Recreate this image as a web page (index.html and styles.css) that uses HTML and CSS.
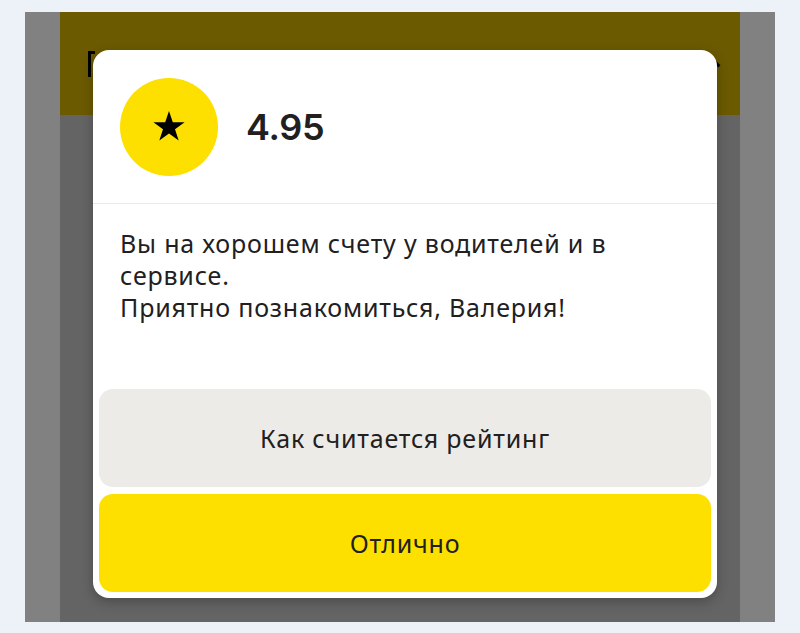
FILE: index.html
```html
<!DOCTYPE html>
<html lang="ru">
<head>
  <meta charset="UTF-8">
  <title>Рейтинг</title>
  <link rel="stylesheet" href="styles.css">
</head>
<body>
  <div class="device">
    <div class="side"></div>
    <div class="screen">
      <header class="topbar">
        <span class="menu-icon"></span>
        <span class="close-icon"></span>
      </header>

      <div class="modal">
        <div class="modal-head">
          <div class="avatar">
            <svg width="32" height="30" viewBox="0 0 32 30">
              <path d="M16 0 L19.8 11.2 L31.6 11.2 L22 18.2 L25.7 29.6 L16 22.6 L6.3 29.6 L10 18.2 L0.4 11.2 L12.2 11.2 Z" fill="#000"/>
            </svg>
          </div>
          <div class="rating">4.95</div>
        </div>

        <p class="modal-text">
          Вы на хорошем счету у водителей и в сервисе.<br>
          Приятно познакомиться, Валерия!
        </p>

        <div class="modal-actions">
          <button class="btn btn-grey">Как считается рейтинг</button>
          <button class="btn btn-yellow">Отлично</button>
        </div>
      </div>
    </div>
    <div class="side"></div>
  </div>
</body>
</html>
```

FILE: styles.css
```css
body {
  margin: 0;
  background-color: #edf1f8;
  font-family: "Noto Sans", "Open Sans", sans-serif;
  color: #21201f;
}

.device {
  display: grid;
  grid-template-columns: 35px 1fr 35px;
  height: 610px;
  margin: 12px 25px 11px;
}

.side {
  background-color: #818181;
}

.screen {
  position: relative;
  background-color: #646464;
}

.topbar {
  position: relative;
  height: 103px;
  background-color: #6b5a00;
}

.menu-icon {
  position: absolute;
  left: 28px;
  top: 39px;
  width: 7px;
  height: 26px;
  border-left: 3px solid #000;
  border-top: 3px solid #000;
  box-sizing: border-box;
}

.close-icon {
  position: absolute;
  left: 650px;
  top: 49px;
  width: 11px;
  height: 3px;
  background-color: #000;
  transform: rotate(45deg);
}

.modal {
  position: absolute;
  left: 33px;
  top: 38px;
  width: 624px;
  height: 548px;
  background-color: #fff;
  border-radius: 16px;
  box-shadow: 0 4px 12px rgba(0, 0, 0, 0.25);
  display: flex;
  flex-direction: column;
}

.modal-head {
  display: flex;
  align-items: center;
  gap: 28px;
  padding: 28px 27px 27px;
  border-bottom: 1px solid #e9e9e9;
}

.avatar {
  width: 98px;
  height: 98px;
  border-radius: 50%;
  background-color: #fde000;
  display: flex;
  align-items: center;
  justify-content: center;
}

.avatar svg {
  margin-top: -2px;
}

.rating {
  font-family: Inter, "Noto Sans", sans-serif;
  font-size: 36px;
  font-weight: 600;
  letter-spacing: -0.3px;
}

.modal-text {
  margin: 0;
  padding: 23px 27px 0;
  font-size: 25px;
  line-height: 32px;
  letter-spacing: 0.8px;
}

.modal-actions {
  margin-top: auto;
  display: flex;
  flex-direction: column;
  gap: 7px;
  padding: 0 6px 6px;
}

.btn {
  height: 98px;
  border: none;
  border-radius: 14px;
  font-family: "Noto Sans", "Open Sans", sans-serif;
  font-size: 25px;
  letter-spacing: 0.8px;
  color: #21201f;
  cursor: pointer;
}

.btn-grey {
  background-color: #edebe7;
}

.btn-yellow {
  background-color: #fde000;
}
```
